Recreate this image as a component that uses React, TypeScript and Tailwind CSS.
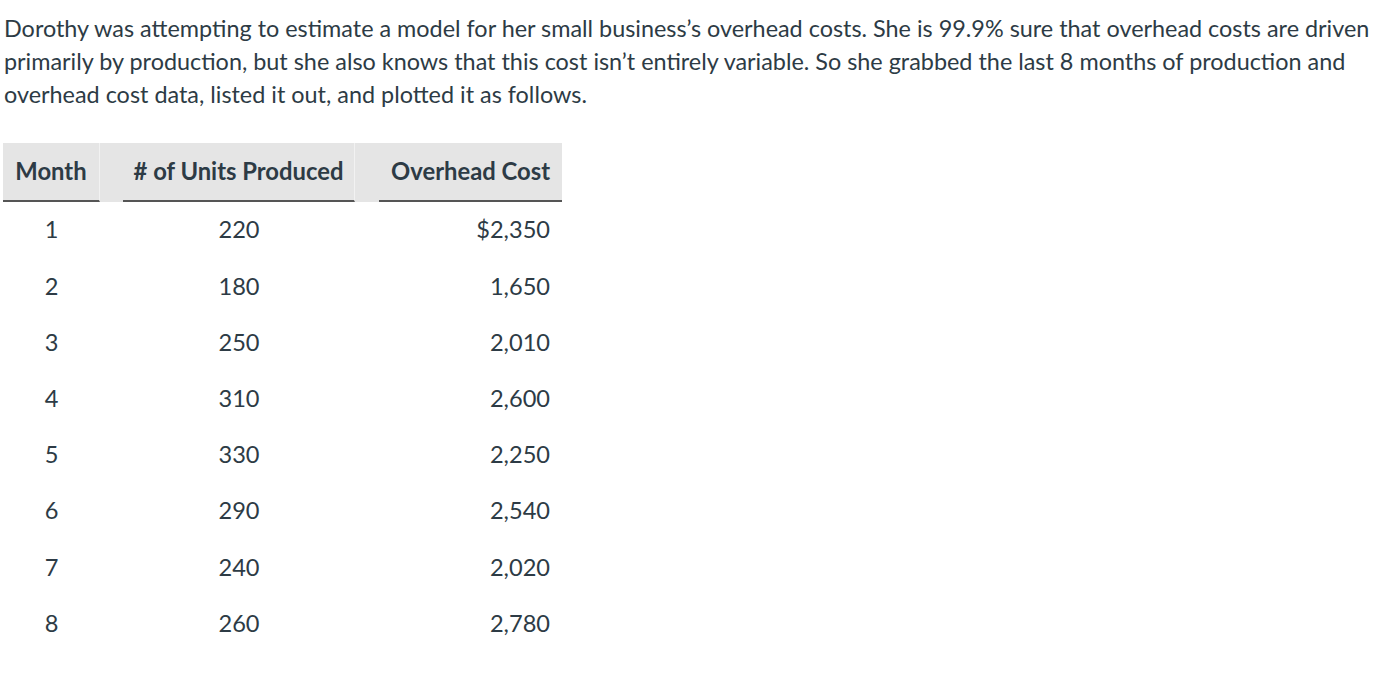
import React from "react";

const rows = [
  ["1", "220", "$2,350"],
  ["2", "180", "1,650"],
  ["3", "250", "2,010"],
  ["4", "310", "2,600"],
  ["5", "330", "2,250"],
  ["6", "290", "2,540"],
  ["7", "240", "2,020"],
  ["8", "260", "2,780"],
];

export default function App() {
  return (
    <div
      className="bg-white w-[1383px] h-[696px] text-[#2d3b45] pt-[12px] pl-[4px]"
      style={{ fontFamily: "Lato, 'Noto Sans', sans-serif" }}
    >
      <p className="text-[23.4px] leading-[33px] pr-[4px]">
        Dorothy was attempting to estimate a model for her small business’s overhead costs. She is 99.9% sure that
        overhead costs are driven primarily by production, but she also knows that this cost isn’t entirely variable.
        So she grabbed the last 8 months of production and overhead cost data, listed it out, and plotted it as
        follows.
      </p>
      <div className="mt-[32px] -ml-[1px] w-[559px] text-[23.6px]">
        <div className="flex h-[59px] font-bold text-[23.8px]">
          <div className="w-[97px] bg-[#e5e5e5] border-b-2 border-[#555] border-r border-r-[#f2f2f2] flex items-center justify-center">
            Month
          </div>
          <div className="w-[23px] bg-[#e5e5e5]" />
          <div className="w-[232px] bg-[#e5e5e5] border-b-2 border-[#555] border-r border-r-[#f2f2f2] flex items-center justify-center">
            # of Units Produced
          </div>
          <div className="w-[24px] bg-[#e5e5e5]" />
          <div className="w-[183px] bg-[#e5e5e5] border-b-2 border-[#555] flex items-center justify-end pr-[12px]">
            Overhead Cost
          </div>
        </div>
        {rows.map((r) => (
          <div key={r[0]} className="flex h-[56.2px] items-center">
            <div className="w-[97px] text-center">{r[0]}</div>
            <div className="w-[23px]" />
            <div className="w-[232px] text-center">{r[1]}</div>
            <div className="w-[24px]" />
            <div className="w-[183px] text-right pr-[12px]">{r[2]}</div>
          </div>
        ))}
      </div>
    </div>
  );
}
